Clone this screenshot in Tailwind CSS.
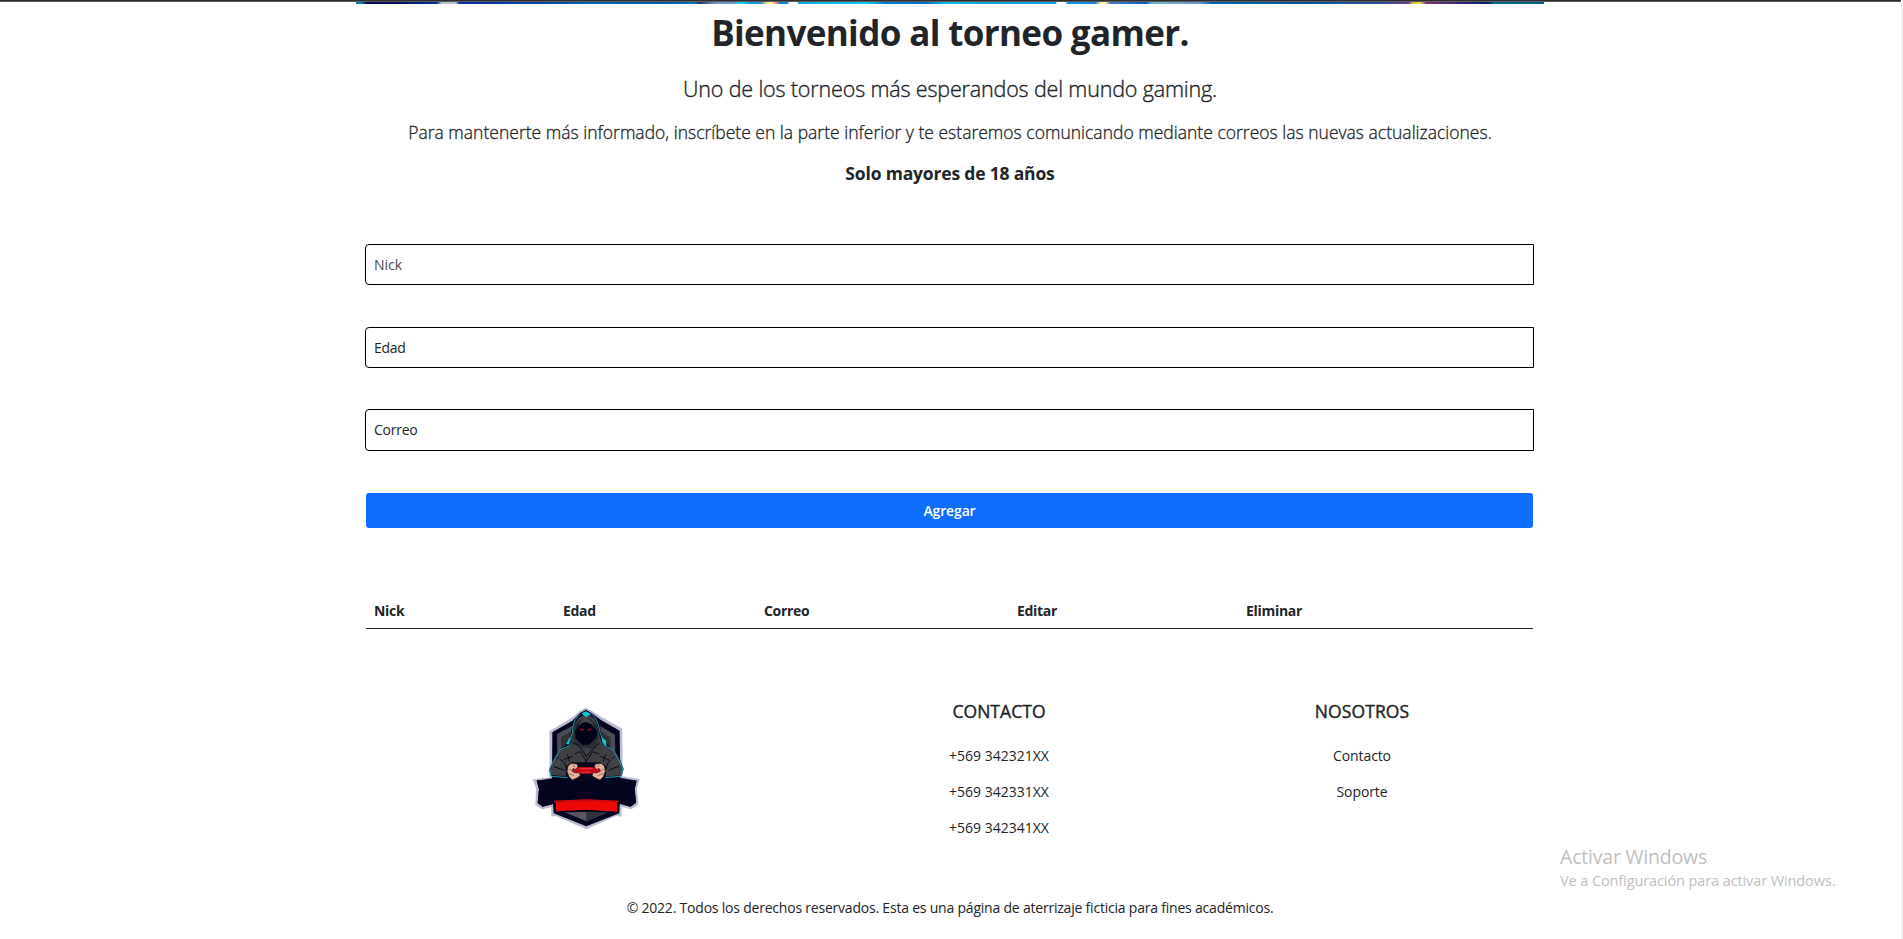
<!DOCTYPE html>
<html lang="es">
<head>
<meta charset="utf-8">
<title>Torneo gamer</title>
<script src="https://cdn.jsdelivr.net/npm/@tailwindcss/browser@4"></script>
</head>
<body class="flex h-[939px] overflow-hidden bg-white font-['Open_Sans','Noto_Sans',sans-serif] text-sm text-[#212529]">
<div class="flex min-w-0 flex-1 flex-col">
  <div class="h-px bg-[#2f2d2e]"></div>
  <div class="h-px bg-[#5d5a5b]"></div>
  <main class="ml-[356px] w-[1188px]">
    <!-- banner -->
    <svg class="block h-[2px] w-full" viewBox="0 0 1188 2" preserveAspectRatio="none">
      <defs>
        <linearGradient id="banner">
          <stop offset="0" stop-color="#0a6fa0"/><stop offset=".004" stop-color="#0a86c8"/><stop offset=".009" stop-color="#020c50"/><stop offset=".035" stop-color="#020a56"/><stop offset=".068" stop-color="#0636a0"/>
          <stop offset=".072" stop-color="#b9bfd8"/><stop offset=".084" stop-color="#b9bfd8"/><stop offset=".087" stop-color="#0834a0"/><stop offset=".15" stop-color="#0340a8"/><stop offset=".2" stop-color="#0266b4"/><stop offset=".26" stop-color="#0058b0"/><stop offset=".285" stop-color="#0a70b0"/>
          <stop offset=".29" stop-color="#2c3560"/><stop offset=".302" stop-color="#7090c8"/><stop offset=".318" stop-color="#68a0d8"/><stop offset=".325" stop-color="#00dcf0"/><stop offset=".332" stop-color="#0a98dc"/><stop offset=".341" stop-color="#2090e0"/><stop offset=".346" stop-color="#fff060"/><stop offset=".35" stop-color="#fff8b0"/><stop offset=".354" stop-color="#e08060"/><stop offset=".357" stop-color="#0a80d8"/><stop offset=".363" stop-color="#0a90e0"/>
          <stop offset=".365" stop-color="#fff"/><stop offset=".371" stop-color="#fff"/><stop offset=".373" stop-color="#00a8e8"/><stop offset=".43" stop-color="#00d0f0"/><stop offset=".445" stop-color="#0078d0"/><stop offset=".48" stop-color="#0070c8"/><stop offset=".495" stop-color="#00b8e8"/><stop offset=".53" stop-color="#00a0e0"/><stop offset=".589" stop-color="#00a4ec"/>
          <stop offset=".59" stop-color="#fff"/><stop offset=".597" stop-color="#fff"/><stop offset=".599" stop-color="#0a9ce8"/><stop offset=".622" stop-color="#1a80d8"/><stop offset=".627" stop-color="#fff0a0"/><stop offset=".631" stop-color="#fff0a0"/><stop offset=".635" stop-color="#4878d0"/><stop offset=".665" stop-color="#0a58b8"/><stop offset=".67" stop-color="#70b8c8"/><stop offset=".71" stop-color="#6898d0"/><stop offset=".72" stop-color="#0068b0"/><stop offset=".79" stop-color="#005898"/><stop offset=".86" stop-color="#2a5098"/>
          <stop offset=".886" stop-color="#703a90"/><stop offset=".89" stop-color="#e8c040"/><stop offset=".896" stop-color="#d8e050"/><stop offset=".901" stop-color="#803078"/><stop offset=".93" stop-color="#302878"/><stop offset=".953" stop-color="#021c60"/><stop offset=".958" stop-color="#007090"/><stop offset="1" stop-color="#005e88"/>
        </linearGradient>
      </defs>
      <rect width="1188" height="2" fill="url(#banner)"/>
    </svg>
    <div class="px-[10px]">
      <header class="text-center whitespace-nowrap">
        <h1 class="h-14 text-[35px] leading-[57px] font-bold tracking-[-0.64px]">Bienvenido al torneo gamer.</h1>
        <p class="h-14 text-[21.5px] leading-[57px] font-light tracking-[-0.16px] [-webkit-text-stroke:0.35px]">Uno de los torneos más esperandos del mundo gaming.</p>
        <p class="h-8 text-[17.5px] leading-[33px] font-light tracking-[0.01px] [-webkit-text-stroke:0.3px]">Para mantenerte más informado, inscríbete en la parte inferior y te estaremos comunicando mediante correos las nuevas actualizaciones.</p>
        <p class="mt-[9px] h-8 text-[17.5px] leading-8 font-bold tracking-[-0.18px]">Solo mayores de 18 años</p>
      </header>
      <form class="mt-[55px] flex flex-col">
        <div class="-ml-px flex h-[41px] w-[1169px] items-center rounded-l border border-black px-2 pt-px text-[#444a50]">Nick</div>
        <div class="mt-[42px] -ml-px flex h-[41px] w-[1169px] items-center rounded-l border border-black px-2 pt-px tracking-[-0.25px]">Edad</div>
        <div class="mt-[41px] -ml-px flex h-[42px] w-[1169px] items-center rounded-l border border-black px-2 tracking-[-0.25px]">Correo</div>
        <button type="button" class="mt-[42px] h-[35px] w-[1167px] rounded-[3px] bg-[#0d6efd] pt-px font-semibold tracking-[-0.15px] text-white">Agregar</button>
      </form>
      <div class="mt-[64px] grid h-[37px] w-[1167px] grid-cols-[189px_201px_253px_229px_295px] border-b border-[#212529] leading-[38px] font-bold tracking-[-0.3px]">
        <div class="px-2">Nick</div><div class="px-2">Edad</div><div class="px-2">Correo</div><div class="px-2">Editar</div><div class="px-2">Eliminar</div>
      </div>
    </div>
  </main>
  <footer class="flex flex-1 flex-col">
    <div class="flex h-[211px] pt-[66px] text-center">
      <div class="ml-[403px] flex w-[364px] justify-center pl-1">
        <svg class="h-[145px] w-[135px]" viewBox="0 0 405 435">
          <path fill="#bcbcd0" d="M198 38 217 49 243 65 307 101 308 244 359 252 351 280 355 329 334 343 305 336 304 365 290 362 199 403 106 363 94 365 93 337 66 343 46 329 48 280 38 253 89 247 88 109 158 66 180 47Z"/>
          <path fill="#04041f" d="M198 44 218 56 243 75 299 107 301 248 350 257 344 281 348 323 332 335 299 326 298 355 199 394 101 355 99 327 68 335 53 324 57 283 50 257 96 250 97 112 157 77 180 54Z"/>
          <path fill="#4b4c55" d="M157 92 111 117 112 178 123 160 123 127 153 111ZM240 93 285 119 286 182 271 163 270 128 243 111Z"/>
          <path fill="#303238" d="M123 127 153 111 151 127 137 150 123 163ZM270 128 245 112 247 132 262 148 272 160Z"/>
          <path fill="#16c3cf" d="M150 126 138 147 152 150ZM245 126 258 137 259 154 245 150Z"/>
          <path fill="#3e4044" stroke="#080820" stroke-width="2" d="M198 58C180 60 166 77 160 97L152 135 146 153 119 165 103 190 88 226 93 241 148 246 155 212 244 212 249 247 304 242 310 222 297 189 282 166 252 152 242 132 234 94C228 72 216 60 198 58Z"/>
          <path fill="#16c3cf" d="M184 55 198 49 214 57 198 67Z"/>
          <path fill="none" stroke="#24b5bd" stroke-width="2.5" d="M181 58C165 69 158 90 157 112L150 137M216 58C231 72 237 91 240 112L249 138M148 152 119 165 106 188 89 219 92 244 144 248M253 151 280 165 294 191 308 218 304 244 255 248"/>
          <path fill="#2b2d34" d="M165 91 180 75 198 69 215 75 230 91 237 128 229 149 221 162 170 155 159 132Z"/>
          <path fill="#020218" d="M174 88 198 79 221 88 232 110 229 128 207 149 189 151 167 130 165 108Z"/>
          <path fill="#3d3e42" d="M154 141 178 153 195 174 199 182 216 164 240 143 247 153 238 177 218 170 199 198 181 170 163 177 150 150Z"/>
          <path fill="none" stroke="#070719" stroke-width="3" d="M154 141 178 153 199 184 217 164 240 143M163 177 181 170 199 198 218 170 238 177M113 187 134 204 145 239M284 185 264 204 251 241M131 194 158 184M241 184 269 196M102 215 134 226M266 226 297 213M142 179 149 199M257 178 250 199M198 197V216"/>
          <path fill="#48494b" d="M169 101 182 80 196 67 207 75 217 83 229 104 214 88 198 80 184 85ZM106 207 120 187 122 202 111 213ZM275 190 296 214 286 211 274 201Z"/>
          <path fill="#c50a1b" d="m180 100 12 4-3 3-7-2Zm34 0-12 4 3 3 7-2Z"/>
          <path fill="#08081f" d="M138 214 154 202 240 202 258 214 258 246 240 258 154 258 137 242Z"/>
          <path fill="#c90813" d="M159 222 178 216 217 216 238 221 244 239 231 245 218 236 179 236 165 246 154 239Z"/>
          <path fill="#e8343a" d="M178 219h40v4h-40Zm4 11h31v3h-31Z"/>
          <path fill="#e9b29c" stroke="#281720" stroke-width="2" d="m144 213 10-8 17 2 3 9-9 8-5-4-4 9 12 5 9-2 4 10-12 8-12 5-10-10-6-16Zm109 0-10-8-17 2-3 9 9 8 5-4 4 9-12 5-9-2-4 10 12 8 12 5 10-10 6-16Z"/>
          <path fill="none" stroke="#7a4544" stroke-width="2" d="m146 224 13 2m-12 9 15 7m89-18-13 2m12 9-15 7M158 209l7 6M239 209l-7 6"/>
          <path fill="#04041f" d="M50 256 92 256 130 259 199 262 268 259 306 255 350 257 344 281 348 323 332 335 299 326 99 327 68 335 53 324 57 283Z"/>
          <path fill="#575861" d="M132 351 199 350 267 351 199 379Z"/>
          <path fill="#303138" d="M199 350 267 351 199 379Z"/>
          <path fill="#04041f" d="M96 312 104 318 199 311 295 318 302 312 293 353 199 350 107 353Z"/>
          <path fill="#ee0909" d="M99 317 199 313 300 317 291 322 292 350 199 344 107 349 108 323Z"/>
          <path fill="none" stroke="#9b0715" stroke-width="2" d="M103 320 199 317 296 320"/>
        </svg>
      </div>
      <div class="w-[464px]">
        <h2 class="mt-px h-[30px] text-[17.5px] leading-[30px] font-medium tracking-[0.05px] [-webkit-text-stroke:0.4px]">CONTACTO</h2>
        <p class="mt-[12px] h-9 leading-9">+569 342321XX</p>
        <p class="h-9 leading-9">+569 342331XX</p>
        <p class="h-9 leading-9">+569 342341XX</p>
      </div>
      <div class="w-[262px]">
        <h2 class="mt-px h-[30px] text-[17.5px] leading-[30px] font-medium tracking-[0.1px] [-webkit-text-stroke:0.4px]">NOSOTROS</h2>
        <p class="mt-[12px] h-9 leading-9 tracking-[-0.1px]">Contacto</p>
        <p class="h-9 leading-9 tracking-[-0.1px]">Soporte</p>
      </div>
    </div>
    <p class="mt-[50px] ml-[356px] h-9 w-[1188px] text-center leading-9 tracking-[-0.21px]">© 2022. Todos los derechos reservados. Esta es una página de aterrizaje ficticia para fines académicos.</p>
  </footer>
</div>
<div class="mt-[2px] w-[2px] bg-[#f0f0f0]"></div>
<!-- system watermark over the page -->
<div class="absolute top-[843px] left-[1560px] whitespace-nowrap text-[#bfbfbf]">
  <div class="h-7 text-[19.5px] leading-7 tracking-[-0.2px]">Activar Windows</div>
  <div class="h-5 text-[14.5px] leading-5 tracking-[-0.1px]">Ve a Configuración para activar Windows.</div>
</div>
</body>
</html>
